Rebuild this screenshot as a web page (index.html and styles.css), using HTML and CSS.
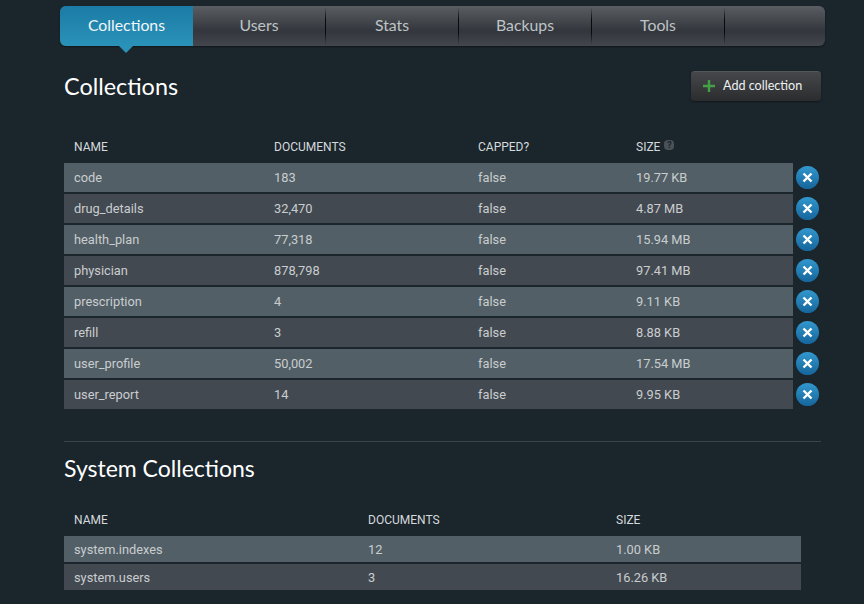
FILE: index.html
```html
<!doctype html>
<html lang="en">
<head>
	<meta charset="UTF-8">
	<title>Collections</title>
	<link rel="stylesheet" href="styles.css">
</head>
<body>
	<div class="page">
		<ul class="tabs">
			<li class="tab active">Collections</li>
			<li class="tab">Users</li>
			<li class="tab">Stats</li>
			<li class="tab">Backups</li>
			<li class="tab">Tools</li>
			<li class="tab last"></li>
		</ul>
		<div class="title-row">
			<h1>Collections</h1>
			<a class="add-btn" href="#">
				<svg class="plus" width="12" height="12" viewBox="0 0 12 12"><path d="M6 0v12M0 6h12" stroke="#43a047" stroke-width="2.4" fill="none"/></svg>
				Add collection
			</a>
		</div>
		<table class="list user-list">
			<thead>
				<tr>
					<th class="c-name">Name</th>
					<th class="c-docs">Documents</th>
					<th class="c-capped">Capped?</th>
					<th class="c-size">Size <span class="help">?</span></th>
					<th class="c-del"></th>
				</tr>
			</thead>
			<tbody>
				<tr><td>code</td><td>183</td><td>false</td><td>19.77 KB</td><td class="del"><a class="del-btn" href="#"><svg width="11" height="11" viewBox="0 0 11 11"><path d="M1.5 1.5l8 8M9.5 1.5l-8 8" stroke="#fff" stroke-width="2.4" fill="none"/></svg></a></td></tr>
				<tr><td>drug_details</td><td>32,470</td><td>false</td><td>4.87 MB</td><td class="del"><a class="del-btn" href="#"><svg width="11" height="11" viewBox="0 0 11 11"><path d="M1.5 1.5l8 8M9.5 1.5l-8 8" stroke="#fff" stroke-width="2.4" fill="none"/></svg></a></td></tr>
				<tr><td>health_plan</td><td>77,318</td><td>false</td><td>15.94 MB</td><td class="del"><a class="del-btn" href="#"><svg width="11" height="11" viewBox="0 0 11 11"><path d="M1.5 1.5l8 8M9.5 1.5l-8 8" stroke="#fff" stroke-width="2.4" fill="none"/></svg></a></td></tr>
				<tr><td>physician</td><td>878,798</td><td>false</td><td>97.41 MB</td><td class="del"><a class="del-btn" href="#"><svg width="11" height="11" viewBox="0 0 11 11"><path d="M1.5 1.5l8 8M9.5 1.5l-8 8" stroke="#fff" stroke-width="2.4" fill="none"/></svg></a></td></tr>
				<tr><td>prescription</td><td>4</td><td>false</td><td>9.11 KB</td><td class="del"><a class="del-btn" href="#"><svg width="11" height="11" viewBox="0 0 11 11"><path d="M1.5 1.5l8 8M9.5 1.5l-8 8" stroke="#fff" stroke-width="2.4" fill="none"/></svg></a></td></tr>
				<tr><td>refill</td><td>3</td><td>false</td><td>8.88 KB</td><td class="del"><a class="del-btn" href="#"><svg width="11" height="11" viewBox="0 0 11 11"><path d="M1.5 1.5l8 8M9.5 1.5l-8 8" stroke="#fff" stroke-width="2.4" fill="none"/></svg></a></td></tr>
				<tr><td>user_profile</td><td>50,002</td><td>false</td><td>17.54 MB</td><td class="del"><a class="del-btn" href="#"><svg width="11" height="11" viewBox="0 0 11 11"><path d="M1.5 1.5l8 8M9.5 1.5l-8 8" stroke="#fff" stroke-width="2.4" fill="none"/></svg></a></td></tr>
				<tr><td>user_report</td><td>14</td><td>false</td><td>9.95 KB</td><td class="del"><a class="del-btn" href="#"><svg width="11" height="11" viewBox="0 0 11 11"><path d="M1.5 1.5l8 8M9.5 1.5l-8 8" stroke="#fff" stroke-width="2.4" fill="none"/></svg></a></td></tr>
			</tbody>
		</table>
		<hr class="divider">
		<h2>System Collections</h2>
		<table class="list system-list">
			<thead>
				<tr>
					<th class="s-name">Name</th>
					<th class="s-docs">Documents</th>
					<th class="s-size">Size</th>
				</tr>
			</thead>
			<tbody>
				<tr><td>system.indexes</td><td>12</td><td>1.00 KB</td></tr>
				<tr><td>system.users</td><td>3</td><td>16.26 KB</td></tr>
			</tbody>
		</table>
	</div>
</body>
</html>
```

FILE: styles.css
```css
html, body { margin: 0; padding: 0; height: 100%; overflow: hidden; }
body { background: #1b252c; color: #c9cdcf; font: 12.8px Roboto, "Liberation Sans", sans-serif; }
.page { width: 757px; padding: 6px 0 0 64px; }

.tabs { display: flex; width: 765px; height: 40px; margin: 0 0 0 -4px; padding: 0; list-style: none; border-radius: 6px; box-shadow: 0 1px 2px rgba(0,0,0,.4); background: linear-gradient(#5a5e63, #33373d 62%, #43474d); }
.tab { position: relative; width: 133px; box-sizing: border-box; border-right: 1px solid #000; border-image: linear-gradient(transparent 5%, #0a0a0a 35%, #0a0a0a 65%, transparent 95%) 1; font: 15.8px/38px Lato, sans-serif; color: #bfc4c7; text-align: center; }
.tab.last { flex: 1; border-right: 0; }
.tab.active { border-right: 0; border-radius: 6px 0 0 6px; color: #f2f6f8; background: linear-gradient(#1b7ba6, #2a92b8); }
.tab.active::after { content: ""; position: absolute; left: 59px; top: 40px; border: 7px solid transparent; border-top-color: #2a92b8; border-bottom: 0; }

.title-row { display: flex; justify-content: space-between; align-items: flex-start; height: 88px; }
h1, h2 { margin: 0; font-family: Lato, sans-serif; font-weight: 400; color: #fff; line-height: 30px; }
h1 { margin-top: 25px; font-size: 23.4px; }
.add-btn { display: flex; align-items: center; gap: 8px; box-sizing: border-box; width: 130px; height: 30px; margin-top: 25px; padding: 0 0 2px 12px; border-radius: 4px; border-top: 1px solid #55585a; background: linear-gradient(#45474a, #2b2c2e); color: #eef1f2; font: 12.6px Lato, sans-serif; text-decoration: none; box-shadow: 0 1px 2px rgba(0,0,0,.4); }

.list { border-collapse: separate; border-spacing: 0 2px; table-layout: fixed; margin: 0; }
.list th { box-sizing: border-box; height: 25px; padding: 0 0 3px 10px; font-weight: 400; font-size: 12px; text-align: left; text-transform: uppercase; color: #d5dadc; }
.list td { padding: 0 0 0 10px; background: #434951; }
.list tbody tr:nth-child(odd) td { background: #525f66; }
.user-list { width: 757px; }
.user-list td { height: 29px; }
.c-name { width: 200px; }
.c-docs { width: 204px; }
.c-capped { width: 158px; }
.c-size { width: 167px; }
.c-del { width: 28px; }
.list tbody tr td.del { padding: 0 0 0 3px; background: none; }
.del-btn { display: flex; align-items: center; justify-content: center; width: 23px; height: 23px; border-radius: 50%; background: linear-gradient(#3298ce, #15659b); }
.help { display: inline-block; width: 10px; height: 10px; margin-left: 1px; border-radius: 4px; background: #4a5157; color: #1b252c; font-size: 9px; font-weight: 700; line-height: 10px; text-align: center; vertical-align: 3px; text-transform: none; }

.divider { height: 1px; margin: 30px 0 0; border: 0; background: #3a4248; }
h2 { margin-top: 11px; font-size: 23px; }
.system-list { width: 737px; margin-top: 24px; }
.system-list td { height: 26px; }
.s-name { width: 294px; }
.s-docs { width: 248px; }
.s-size { width: 195px; }
```
